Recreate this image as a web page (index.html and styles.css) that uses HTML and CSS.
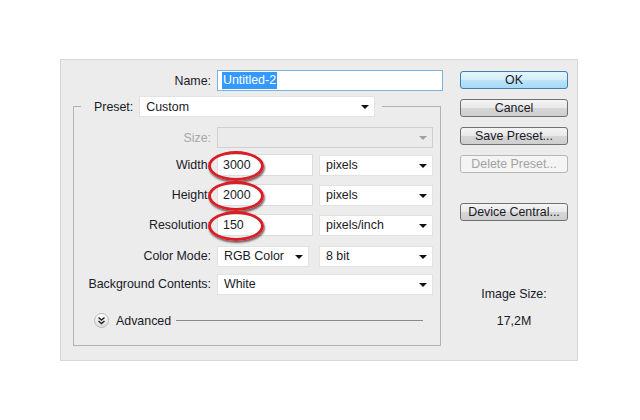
FILE: index.html
```html
<!DOCTYPE html>
<html lang="en">
<head>
    <meta charset="UTF-8">
    <title>New Document</title>
    <link rel="stylesheet" href="styles.css">
</head>
<body>

    <div class="dialog">
        <!-- Left side: name + preset group -->
        <div class="main">
            <div class="row name-row">
                <span class="label">Name:</span>
                <div class="field name-field"><span class="selected">Untitled-2</span></div>
            </div>

            <fieldset class="group">
                <legend class="preset">
                    <span class="preset-label">Preset:</span>
                    <div class="select preset-select">Custom<i class="arrow"></i></div>
                </legend>

                <div class="row size-row">
                    <span class="label disabled">Size:</span>
                    <div class="select wide disabled-select"><i class="arrow grey"></i></div>
                </div>

                <div class="row">
                    <span class="label">Width:</span>
                    <div class="num-wrap">
                        <div class="field num">3000</div>
                        <span class="circle"></span>
                    </div>
                    <div class="select unit">pixels<i class="arrow"></i></div>
                </div>

                <div class="row">
                    <span class="label">Height:</span>
                    <div class="num-wrap">
                        <div class="field num">2000</div>
                        <span class="circle"></span>
                    </div>
                    <div class="select unit">pixels<i class="arrow"></i></div>
                </div>

                <div class="row">
                    <span class="label">Resolution:</span>
                    <div class="num-wrap">
                        <div class="field num">150</div>
                        <span class="circle"></span>
                    </div>
                    <div class="select unit">pixels/inch<i class="arrow"></i></div>
                </div>

                <div class="row mode-row">
                    <span class="label">Color Mode:</span>
                    <div class="select mode">RGB Color<i class="arrow"></i></div>
                    <div class="select unit">8 bit<i class="arrow"></i></div>
                </div>

                <div class="row bg-row">
                    <span class="label">Background Contents:</span>
                    <div class="select wide">White<i class="arrow"></i></div>
                </div>

                <div class="advanced">
                    <span class="adv-icon">
                        <svg width="9" height="9" viewBox="0 0 9 9">
                            <path d="M1.5 1.5 L4.5 4 L7.5 1.5 M1.5 5 L4.5 7.5 L7.5 5" fill="none" stroke="#222" stroke-width="1.4"/>
                        </svg>
                    </span>
                    <span class="adv-text">Advanced</span>
                    <span class="adv-line"></span>
                </div>
            </fieldset>
        </div>

        <!-- Right side: buttons -->
        <div class="side">
            <button class="btn ok">OK</button>
            <button class="btn">Cancel</button>
            <button class="btn">Save Preset...</button>
            <button class="btn" disabled>Delete Preset...</button>
            <button class="btn device">Device Central...</button>

            <div class="image-size">
                <p>Image Size:</p>
                <p>17,2M</p>
            </div>
        </div>
    </div>

</body>
</html>
```

FILE: styles.css
```css
body {
    margin: 0;
    background-color: #fff;
    font-family: 'Liberation Sans', Arial, sans-serif;
    font-size: 12.4px;
    color: #1a1a28;
}

.dialog {
    margin: 59px 0 0 60px;
    width: 518px;
    height: 302px;
    background-color: #ececec;
    border: 1px solid #d6d6d6;
    display: flex;
    padding-top: 10px;
    box-sizing: border-box;
}

.main {
    width: 382px;
}

.row {
    display: flex;
    align-items: center;
    height: 22px;
    margin-top: 8px;
}

.label {
    width: 137px;
    margin-right: 6px;
    text-align: right;
    flex-shrink: 0;
}

.label.disabled {
    color: #a8a8a8;
}

/* Name */
.name-row {
    margin-top: 0;
    height: 21px;
}

.name-row .label {
    width: 150px;
}

.field {
    height: 21px;
    box-sizing: border-box;
    background-color: #fff;
    border: 1px solid #dcdcdc;
    padding-left: 5px;
    display: flex;
    align-items: center;
}

.name-field {
    width: 226px;
    border-color: #7eb0dc;
}

.selected {
    background-color: #3399ff;
    color: #fff;
    padding: 1px 1px 2px 1px;
    margin-left: -1px;
}

/* Preset group */
.group {
    margin: 5px 0 0 12px;
    width: 368px;
    height: 250px;
    box-sizing: border-box;
    border: 1px solid #b2b2b2;
    padding: 0;
}

.preset {
    display: flex;
    align-items: center;
    margin-left: 7px;
    padding: 0 7px 0 13px;
}

.preset-label {
    margin-right: 6px;
}

.select {
    position: relative;
    height: 21px;
    box-sizing: border-box;
    background-color: #fff;
    border: 1px solid #e2e2e2;
    padding-left: 6px;
    display: flex;
    align-items: center;
}

.arrow {
    position: absolute;
    right: 5px;
    top: 8px;
    border-left: 4px solid transparent;
    border-right: 4px solid transparent;
    border-top: 4px solid #111;
}

.arrow.grey {
    border-top-color: #a0a0a0;
}

.preset-select {
    width: 236px;
}

.wide {
    width: 216px;
}

.disabled-select {
    background-color: #ebebeb;
    border-color: #d0d0d0;
}

.size-row {
    margin-top: 10px;
    height: 21px;
}

.size-row + .row {
    margin-top: 6px;
}

.num-wrap {
    position: relative;
    margin-right: 6px;
}

.num {
    width: 96px;
    height: 22px;
}

.unit {
    width: 114px;
}

.mode-row {
    margin-top: 9px;
}

.mode {
    width: 92px;
    margin-right: 10px;
}

.bg-row {
    margin-top: 6px;
}

/* red marker circles over the number fields */
.circle {
    position: absolute;
    left: -9px;
    top: -3px;
    width: 50px;
    height: 24px;
    border: 3px solid #d81f28;
    border-radius: 50%;
    box-shadow: 1px 2px 2px rgba(50, 0, 0, 0.6);
}

/* Advanced */
.advanced {
    display: flex;
    align-items: center;
    margin: 18px 0 0 20px;
}

.adv-icon {
    width: 13px;
    height: 13px;
    border: 1px solid #b8b8b8;
    border-radius: 50%;
    background: linear-gradient(#ffffff, #dcdcdc);
    display: flex;
    align-items: center;
    justify-content: center;
}

.adv-text {
    margin-left: 7px;
}

.adv-line {
    width: 247px;
    height: 1px;
    margin-left: 5px;
    background-color: #8a8a8a;
}

/* Buttons */
.side {
    margin-left: 17px;
    width: 108px;
    display: flex;
    flex-direction: column;
}

.btn {
    width: 108px;
    height: 18px;
    margin-top: 10px;
    padding: 0;
    font-family: 'Liberation Sans', Arial, sans-serif;
    font-size: 12.4px;
    color: #1a1a28;
    border: 1px solid #707070;
    border-radius: 3px;
    background: linear-gradient(#f4f4f4 0%, #e8e8e8 50%, #d6d6d6 51%, #cfcfcf 100%);
}

.btn.ok {
    margin-top: 1px;
    border-color: #3c7fb1;
    background: linear-gradient(#e6f5fd 0%, #d4edfb 50%, #bde4f8 51%, #a7d9f5 100%);
}

.btn:disabled {
    color: #a3a3a3;
    border-color: #b5b8bb;
    background: #f4f4f4;
}

.btn.device {
    margin-top: 30px;
}

.image-size {
    margin-top: 66px;
    text-align: center;
}

.image-size p {
    margin: 0 0 13px 0;
    line-height: 14px;
}
```
